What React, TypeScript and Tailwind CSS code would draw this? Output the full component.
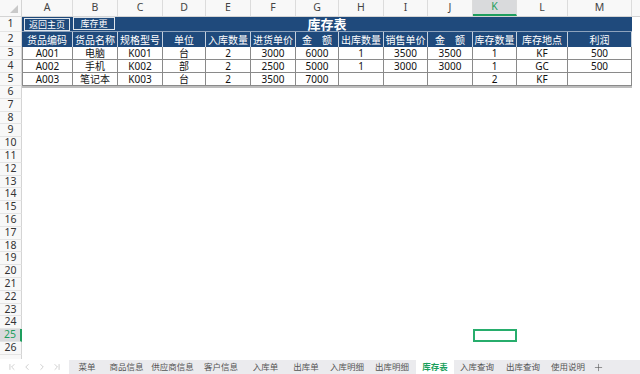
import React from 'react';
import clsx from 'clsx';
import { ChevronFirst, ChevronLeft, ChevronRight, ChevronLast, Plus } from 'lucide-react';

const widths = [
  'w-[51px]', 'w-[45px]', 'w-[45px]', 'w-[43px]', 'w-[45px]', 'w-[45px]', 'w-[43px]',
  'w-[45px]', 'w-[44px]', 'w-[45px]', 'w-[44px]', 'w-[51px]', 'w-[64px]',
];
const letters = ['A', 'B', 'C', 'D', 'E', 'F', 'G', 'H', 'I', 'J', 'K', 'L', 'M'];

const headers = [
  '货品编码', '货品名称', '规格型号', '单位', '入库数量', '进货单价', '金\u3000额',
  '出库数量', '销售单价', '金\u3000额', '库存数量', '库存地点', '利润',
];

const rows = [
  ['A001', '电脑', 'K001', '台', '2', '3000', '6000', '1', '3500', '3500', '1', 'KF', '500'],
  ['A002', '手机', 'K002', '部', '2', '2500', '5000', '1', '3000', '3000', '1', 'GC', '500'],
  ['A003', '笔记本', 'K003', '台', '2', '3500', '7000', '', '', '', '2', 'KF', ''],
];

const tabs = [
  { name: '菜单', w: 'w-[36px]' },
  { name: '商品信息', w: 'w-[43px]' },
  { name: '供应商信息', w: 'w-[49px]' },
  { name: '客户信息', w: 'w-[48px]' },
  { name: '入库单', w: 'w-[41px]' },
  { name: '出库单', w: 'w-[40px]' },
  { name: '入库明细', w: 'w-[42px]' },
  { name: '出库明细', w: 'w-[48px]' },
  { name: '库存表', w: 'w-[38px]', active: true },
  { name: '入库查询', w: 'w-[46px]' },
  { name: '出库查询', w: 'w-[46px]' },
  { name: '使用说明', w: 'w-[44px]' },
];

const RowNum = ({ n, active }: { n: number; active?: boolean }) => (
  <div
    className={clsx(
      'w-[22px] shrink-0 flex items-center justify-center text-[10.5px] border-b border-[#e4e4e4]',
      active
        ? 'bg-[#d9dadc] text-[#1e9e5e] border-r-2 border-r-[#1e9e5e]'
        : 'bg-[#f8f8f8] text-[#333] border-r border-r-[#d4d4d4]'
    )}
  >
    {n}
  </div>
);

export default function App() {
  const emptyRows = Array.from({ length: 21 }, (_, i) => i + 6);

  return (
    <div className="w-[640px] h-[374px] overflow-hidden bg-white font-['Noto_Sans','Noto_Sans_CJK_SC',sans-serif] flex flex-col">
      <div className="h-[360px] overflow-hidden">
        {/* column letters */}
        <div className="flex h-[17px] border-b border-[#d4d4d4] bg-[#f8f8f8]">
          <div className="w-[22px] shrink-0 border-r border-[#d4d4d4] relative">
            <svg className="absolute right-[3px] bottom-[3px]" width="8" height="8" viewBox="0 0 8 8">
              <polygon points="8,0 8,8 0,8" fill="#c9c9c9" />
            </svg>
          </div>
          {letters.map((l, i) => (
            <div
              key={l}
              className={clsx(
                widths[i],
                'shrink-0 flex items-center justify-center text-[10.5px] border-r border-r-[#dcdcdc]',
                i === 10 ? 'bg-[#d9dadc] text-[#1e9e5e] border-b-2 border-b-[#1e9e5e]' : 'text-[#444]'
              )}
            >
              {l}
            </div>
          ))}
          <div className="flex-1" />
        </div>

        {/* row 1: title */}
        <div className="flex h-[15px]">
          <RowNum n={1} />
          <div className="w-[610px] shrink-0 relative bg-[#1f4a7c] flex items-center justify-center border-b border-[#8ea3bd]">
            <span className="text-white font-bold text-[13px] leading-none">库存表</span>
            <div className="absolute left-[2px] top-[1px] w-[46px] h-[13px] border border-[#dfe5ec] flex items-center justify-center text-[9px] text-white leading-none">
              返回主页
            </div>
            <div className="absolute left-[51px] top-0 w-[42px] h-[13px] border border-[#dfe5ec] flex items-center justify-center text-[9px] text-white leading-none">
              库存更
            </div>
          </div>
        </div>

        {/* row 2: headers */}
        <div className="flex h-[15px]">
          <RowNum n={2} />
          {headers.map((h, i) => (
            <div
              key={i}
              className={clsx(
                widths[i],
                'shrink-0 bg-[#1f4a7c] text-white text-[10px] leading-none flex items-center justify-center border-r border-[#c5d0dd] whitespace-nowrap'
              )}
            >
              {h}
            </div>
          ))}
        </div>

        {/* data rows */}
        {rows.map((r, ri) => (
          <div key={ri} className="flex h-[13px]">
            <RowNum n={ri + 3} />
            {r.map((c, ci) => (
              <div
                key={ci}
                className={clsx(
                  widths[ci],
                  'shrink-0 flex items-center justify-center text-[10px] leading-none text-[#111] border-r border-b border-[#8a8a8a]',
                  ci === 0 && 'border-l'
                )}
              >
                {c}
              </div>
            ))}
          </div>
        ))}

        {/* empty rows */}
        {emptyRows.map((n) => (
          <div key={n} className="flex h-[12.8px]">
            <RowNum n={n} active={n === 25} />
            {letters.map((l, i) => (
              <div
                key={l}
                className={clsx(
                  widths[i],
                  'shrink-0',
                  n === 6 && 'border-t-2 border-[#bdbdbd]',
                  n === 25 && i === 10 && 'border-2 border-[#27ad6c]'
                )}
              />
            ))}
          </div>
        ))}
        <div className="flex h-[4px]">
          <div className="w-[22px] shrink-0 bg-[#f8f8f8] border-r border-[#d4d4d4]" />
        </div>
      </div>

      {/* sheet tabs */}
      <div className="h-[14px] flex items-stretch">
        <div className="w-[69px] shrink-0 flex items-center pl-[7px] gap-[5px] text-[#b3b3b3]">
          <ChevronFirst size={10} strokeWidth={1.5} />
          <ChevronLeft size={10} strokeWidth={1.5} />
          <ChevronRight size={10} strokeWidth={1.5} />
          <ChevronLast size={10} strokeWidth={1.5} />
        </div>
        <div className="flex-1 flex items-stretch bg-[#ebebee]">
          {tabs.map((t) => (
            <div
              key={t.name}
              className={clsx(
                t.w,
                'shrink-0 flex items-center justify-center text-[8.5px] leading-none whitespace-nowrap',
                t.active ? 'bg-white text-[#1a9f5c] font-semibold' : 'text-[#555]'
              )}
            >
              {t.name}
            </div>
          ))}
          <div className="w-[16px] flex items-center justify-center text-[#555]">
            <Plus size={11} strokeWidth={1.3} />
          </div>
        </div>
      </div>
    </div>
  );
}
